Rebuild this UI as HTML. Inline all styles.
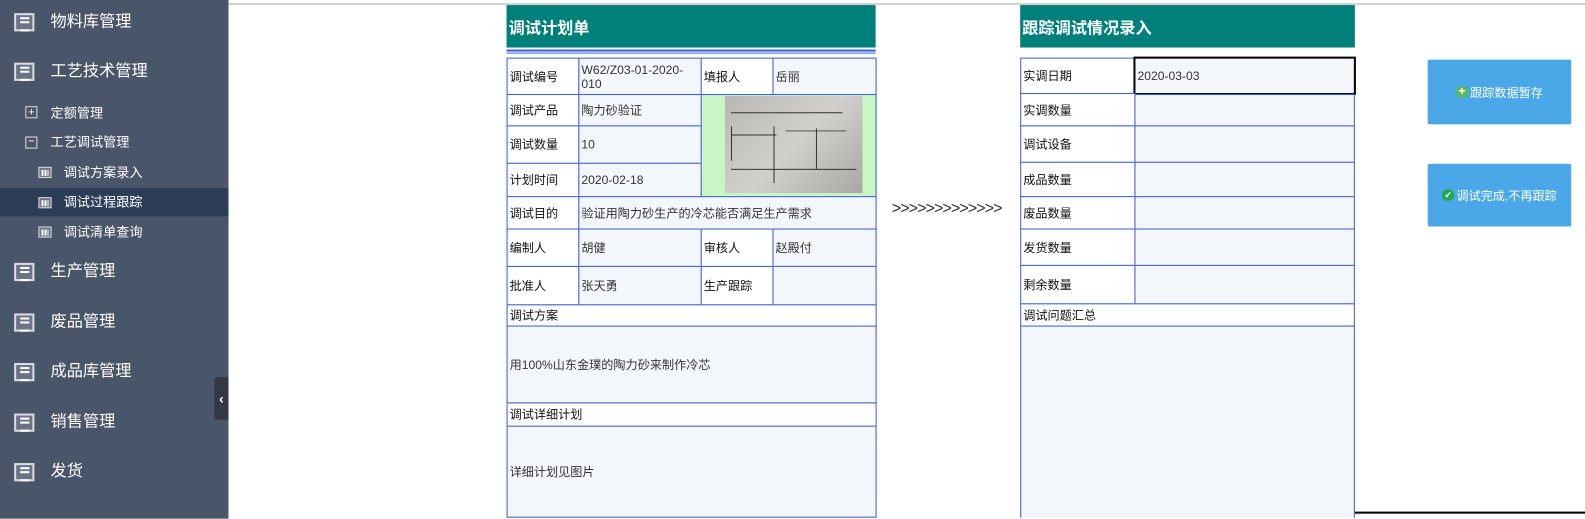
<!DOCTYPE html><html><head><meta charset="utf-8"><style>
*{margin:0;padding:0;box-sizing:border-box}
body{width:1585px;height:513px;overflow:hidden;background:#fff;font-family:"Liberation Sans","Noto Sans CJK SC",sans-serif;position:relative}
#w{position:absolute;left:0;top:0;width:1568px;height:508px;transform:scale(1.0111);transform-origin:0 0}
.sb{position:absolute;left:0;top:0;width:226px;height:513px;background:#4a5569}
.m{position:absolute;left:50px;color:#fff;font-size:16px;line-height:20px}
.mi{position:absolute;left:14px;width:20px;height:18px;border:2px solid #d8dce2;background:#6a7486}
.mi:after{content:"";position:absolute;left:4px;top:2px;width:9px;height:10px;border-top:2px solid #fff;border-bottom:2px solid #fff;box-shadow:inset 0 2px 0 #6a7486,inset 0 4px 0 #fff}
.s{position:absolute;color:#fff;font-size:13px;line-height:16px}
.bi{position:absolute;left:38px;width:13px;height:11px;border:1px solid #ddd;background:#6a7486}
.bi:after{content:"";position:absolute;left:2px;bottom:1px;width:7px;height:6px;background:linear-gradient(90deg,#fff 2px,transparent 2px,transparent 3px,#fff 3px,#fff 5px,transparent 5px,transparent 6px,#fff 6px)}
.c{position:absolute;border:1px solid #3a5bd9;font-size:12px;color:#333;display:flex;align-items:center;padding-left:2px;line-height:14px}
.w{background:#fff;color:#111}
.v{background:#f3f7fb}
.h{position:absolute;top:5px;height:42px;background:#00807b;color:#fff;font-weight:bold;font-size:16px;display:flex;align-items:center;padding-left:2px}
.b{position:absolute;left:1412px;width:142px;background:#4aa8e8;border-radius:2px;color:#fff;font-size:12px;display:flex;align-items:center;justify-content:center}
</style></head><body><div id="w">
<div style="position:absolute;left:226px;top:3px;width:1359px;height:2px;background:#d0d0d0"></div>
<div class="sb">
<div class="mi" style="top:13px"></div><div class="m" style="top:12px">物料库管理</div>
<div class="mi" style="top:62px"></div><div class="m" style="top:61px">工艺技术管理</div>
<div class="s" style="left:25px;top:105px;width:12px;height:12px;border:1px solid #ddd;font-size:11px;line-height:10px;text-align:center">+</div><div class="s" style="left:50px;top:104px">定额管理</div>
<div class="s" style="left:25px;top:135px;width:12px;height:12px;border:1px solid #ddd;font-size:11px;line-height:9px;text-align:center">−</div><div class="s" style="left:50px;top:133px">工艺调试管理</div>
<div style="position:absolute;left:0;top:186px;width:226px;height:28px;background:#2c3d58"></div>
<div class="bi" style="top:165px"></div><div class="s" style="left:63px;top:163px">调试方案录入</div>
<div class="bi" style="top:195px"></div><div class="s" style="left:63px;top:192px">调试过程跟踪</div>
<div class="bi" style="top:224px"></div><div class="s" style="left:63px;top:222px">调试清单查询</div>
<div class="mi" style="top:260px"></div><div class="m" style="top:259px">生产管理</div>
<div class="mi" style="top:310px"></div><div class="m" style="top:309px">废品管理</div>
<div class="mi" style="top:359px"></div><div class="m" style="top:358px">成品库管理</div>
<div class="mi" style="top:409px"></div><div class="m" style="top:408px">销售管理</div>
<div class="mi" style="top:458px"></div><div class="m" style="top:457px">发货</div>
<div style="position:absolute;left:212px;top:373px;width:14px;height:42px;background:#323844;border-radius:3px 0 0 3px;color:#fff;font-size:14px;font-weight:bold;line-height:42px;text-align:center">‹</div>
</div>

<div class="h" style="left:501px;width:365px">调试计划单</div>
<div style="position:absolute;left:501px;top:49px;width:365px;height:4px;border-top:2px solid #3a5bd9;border-bottom:1px solid #3a5bd9"></div>
<div class="c w" style="left:501px;top:57px;width:72px;height:37px">调试编号</div>
<div class="c v" style="left:572px;top:57px;width:122px;height:37px">W62/Z03-01-2020-<br>010</div>
<div class="c w" style="left:693px;top:57px;width:72px;height:37px">填报人</div>
<div class="c v" style="left:764px;top:57px;width:103px;height:37px">岳丽</div>
<div class="c w" style="left:501px;top:93px;width:72px;height:32px">调试产品</div>
<div class="c v" style="left:572px;top:93px;width:122px;height:32px">陶力砂验证</div>
<div class="c w" style="left:501px;top:124px;width:72px;height:38px">调试数量</div>
<div class="c v" style="left:572px;top:124px;width:122px;height:38px">10</div>
<div class="c w" style="left:501px;top:161px;width:72px;height:34px">计划时间</div>
<div class="c v" style="left:572px;top:161px;width:122px;height:34px">2020-02-18</div>
<div class="c" style="left:693px;top:93px;width:174px;height:102px;background:#c8f7c5"></div>
<div style="position:absolute;left:717px;top:95px;width:136px;height:96px;background:linear-gradient(135deg,#b8b7b3,#d2d0cb 50%,#a9a8a4)">
<div style="position:absolute;left:6px;top:16px;width:110px;height:1px;background:#333"></div>
<div style="position:absolute;left:6px;top:38px;width:45px;height:1px;background:#333"></div>
<div style="position:absolute;left:6px;top:30px;width:1px;height:34px;background:#333"></div>
<div style="position:absolute;left:48px;top:30px;width:1px;height:56px;background:#333"></div>
<div style="position:absolute;left:90px;top:32px;width:1px;height:40px;background:#333"></div>
<div style="position:absolute;left:60px;top:34px;width:60px;height:1px;background:#555"></div>
<div style="position:absolute;left:6px;top:72px;width:124px;height:1px;background:#333"></div>
</div>
<div class="c w" style="left:501px;top:194px;width:72px;height:33px">调试目的</div>
<div class="c v" style="left:572px;top:194px;width:295px;height:33px">验证用陶力砂生产的冷芯能否满足生产需求</div>
<div class="c w" style="left:501px;top:226px;width:72px;height:38px">编制人</div>
<div class="c v" style="left:572px;top:226px;width:122px;height:38px">胡健</div>
<div class="c w" style="left:693px;top:226px;width:72px;height:38px">审核人</div>
<div class="c v" style="left:764px;top:226px;width:103px;height:38px">赵殿付</div>
<div class="c w" style="left:501px;top:263px;width:72px;height:39px">批准人</div>
<div class="c v" style="left:572px;top:263px;width:122px;height:39px">张天勇</div>
<div class="c w" style="left:693px;top:263px;width:72px;height:39px">生产跟踪</div>
<div class="c v" style="left:764px;top:263px;width:103px;height:39px"></div>
<div class="c w" style="left:501px;top:301px;width:366px;height:22px">调试方案</div>
<div class="c v" style="left:501px;top:322px;width:366px;height:77px">用100%山东金璞的陶力砂来制作冷芯</div>
<div class="c w" style="left:501px;top:398px;width:366px;height:24px">调试详细计划</div>
<div class="c v" style="left:501px;top:421px;width:366px;height:91px">详细计划见图片</div>

<div style="position:absolute;left:882px;top:198px;font-size:16px;color:#333;letter-spacing:-1px">&gt;&gt;&gt;&gt;&gt;&gt;&gt;&gt;&gt;&gt;&gt;&gt;&gt;</div>

<div class="h" style="left:1009px;width:331px">跟踪调试情况录入</div>
<div class="c w" style="left:1009px;top:57px;width:114px;height:36px">实调日期</div>
<div class="c v" style="left:1121px;top:56px;width:220px;height:38px;border:2px solid #000">2020-03-03</div>
<div class="c w" style="left:1009px;top:92px;width:114px;height:33px">实调数量</div>
<div class="c v" style="left:1122px;top:93px;width:218px;height:32px"></div>
<div class="c w" style="left:1009px;top:124px;width:114px;height:37px">调试设备</div>
<div class="c v" style="left:1122px;top:124px;width:218px;height:37px"></div>
<div class="c w" style="left:1009px;top:160px;width:114px;height:35px">成品数量</div>
<div class="c v" style="left:1122px;top:160px;width:218px;height:35px"></div>
<div class="c w" style="left:1009px;top:194px;width:114px;height:33px">废品数量</div>
<div class="c v" style="left:1122px;top:194px;width:218px;height:33px"></div>
<div class="c w" style="left:1009px;top:226px;width:114px;height:37px">发货数量</div>
<div class="c v" style="left:1122px;top:226px;width:218px;height:37px"></div>
<div class="c w" style="left:1009px;top:262px;width:114px;height:39px">剩余数量</div>
<div class="c v" style="left:1122px;top:262px;width:218px;height:39px"></div>
<div class="c w" style="left:1009px;top:300px;width:331px;height:23px">调试问题汇总</div>
<div class="c v" style="left:1009px;top:322px;width:331px;height:190px;border-bottom:none"></div>
<div style="position:absolute;left:1340px;top:506px;width:245px;height:2px;background:#000"></div>

<div class="b" style="top:59px;height:64px"><span style="display:inline-block;width:12px;height:12px;border-radius:50%;background:#5cb85c;color:#fff;font-size:12px;line-height:11px;text-align:center;font-weight:bold;margin-right:2px">+</span>跟踪数据暂存</div>
<div class="b" style="top:162px;height:62px"><span style="display:inline-block;width:12px;height:12px;border-radius:50%;background:#22a94f;color:#fff;font-size:9px;line-height:12px;text-align:center;margin-right:2px">✔</span>调试完成,不再跟踪</div>
</div></body></html>
